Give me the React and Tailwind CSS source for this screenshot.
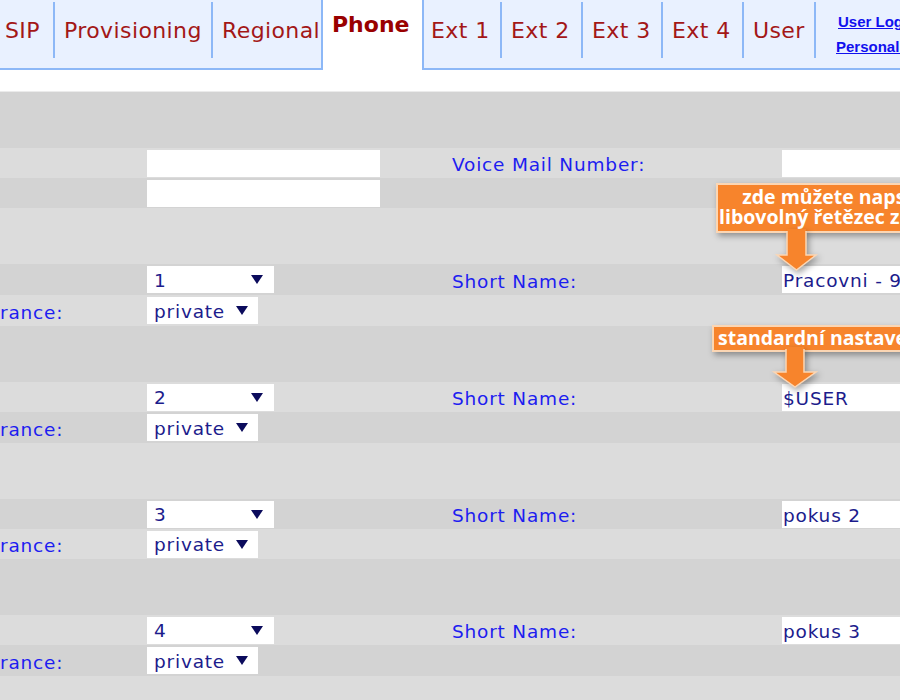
import React from 'react';

const DARK = 'bg-[#d3d3d3]';
const LIGHT = 'bg-[#dcdcdc]';

// triangle used inside the fake select boxes
const Arrow = () => (
    <svg width="12" height="9" viewBox="0 0 12 9" className="shrink-0">
        <polygon points="0,0 12,0 6,9" fill="#0b0b5c" />
    </svg>
);

const Select = ({ value, size }) => (
    <div className={`flex items-center justify-between h-[27px] bg-white pl-[7px] ${size === 'wide' ? 'w-[127px] pr-[11px]' : 'w-[111px] pr-[10px]'}`}>
        <span className="pt-[1px] leading-[27px] text-[#1c1c8c]">{value}</span>
        <Arrow />
    </div>
);

const TextBox = ({ value, wide }) => (
    <div className={`h-[27px] bg-white pl-[1px] ${wide ? 'w-full' : 'w-[233px]'}`}>
        <span className="block pt-[1px] leading-[27px] whitespace-nowrap text-[#1c1c8c]">{value}</span>
    </div>
);

const Label = ({ children }) => (
    <span className="pt-[3px] leading-[27px] whitespace-nowrap text-[#1d1df0]">{children}</span>
);

// one row of the settings table
const Row = ({ h, bg, c1, c2, c3, c4 }) => (
    <div className={`flex ${h} ${bg}`}>
        <div className="w-[147px] flex items-center shrink-0">{c1}</div>
        <div className="w-[305px] flex items-center shrink-0">{c2}</div>
        <div className="w-[330px] flex items-center shrink-0">{c3}</div>
        <div className="flex-1 flex items-center min-w-0">{c4}</div>
    </div>
);

const Tab = ({ label, w, pl }) => (
    <div className={`${w} ${pl} pt-[20px] leading-[22px] tracking-[0.4px] text-[#a31717] whitespace-nowrap shrink-0`}>
        {label}
    </div>
);

const Sep = () => <div className="self-start mt-[2px] h-[56px] w-[2px] bg-[#8db8f7] shrink-0" />;

const App = () => {
    const appearance = <Label>rance:</Label>;

    return (
        <div className="relative w-[900px] h-[700px] overflow-hidden bg-white font-['DejaVu_Sans',sans-serif]">

            {/* Tabs */}
            <div className="flex h-[70px] text-[22px]">
                <div className="flex w-[323px] shrink-0 bg-[#e9f1ff] border-r-2 border-b-2 border-[#8db8f7]">
                    <Tab label="SIP" w="w-[53px]" pl="pl-[5px]" />
                    <Sep />
                    <Tab label="Provisioning" w="w-[156px]" pl="pl-[9px]" />
                    <Sep />
                    <Tab label="Regional" w="flex-1" pl="pl-[9px]" />
                </div>
                <div className="w-[99px] shrink-0 pl-[9px] pt-[14px] leading-[22px] font-bold text-[#990000]">
                    Phone
                </div>
                <div className="flex flex-1 bg-[#e9f1ff] border-l-2 border-b-2 border-[#8db8f7]">
                    <Tab label="Ext 1" w="w-[76px]" pl="pl-[7px]" />
                    <Sep />
                    <Tab label="Ext 2" w="w-[79px]" pl="pl-[9px]" />
                    <Sep />
                    <Tab label="Ext 3" w="w-[78px]" pl="pl-[9px]" />
                    <Sep />
                    <Tab label="Ext 4" w="w-[79px]" pl="pl-[9px]" />
                    <Sep />
                    <Tab label="User" w="w-[70px]" pl="pl-[9px]" />
                    <Sep />
                    <div className="pl-[20px] pt-[9px] leading-[25px] text-[15px] font-bold font-['Liberation_Sans',sans-serif] text-[#1010ee] whitespace-nowrap">
                        <a href="#" className="block underline pl-[2px]">User Login</a>
                        <a href="#" className="block underline">Personal Directory</a>
                    </div>
                </div>
            </div>

            <div className="h-[22px] border-b border-[#ebebeb]" />

            {/* Settings table */}
            <div className="text-[18.5px] tracking-[0.8px]">
                <Row h="h-[56px]" bg={DARK} />
                <Row h="h-[30px]" bg={LIGHT} c2={<TextBox value="" />} c3={<Label>Voice Mail Number:</Label>} c4={<TextBox value="" wide />} />
                <Row h="h-[30px]" bg={DARK} c2={<TextBox value="" />} />
                <Row h="h-[56px]" bg={LIGHT} />
                <Row h="h-[31px]" bg={DARK} c2={<Select value="1" size="wide" />} c3={<Label>Short Name:</Label>} c4={<TextBox value="Pracovni - 9" wide />} />
                <Row h="h-[31px]" bg={LIGHT} c1={appearance} c2={<Select value="private" />} />
                <Row h="h-[56px]" bg={DARK} />
                <Row h="h-[30px]" bg={LIGHT} c2={<Select value="2" size="wide" />} c3={<Label>Short Name:</Label>} c4={<TextBox value="$USER" wide />} />
                <Row h="h-[31px]" bg={DARK} c1={appearance} c2={<Select value="private" />} />
                <Row h="h-[56px]" bg={LIGHT} />
                <Row h="h-[30px]" bg={DARK} c2={<Select value="3" size="wide" />} c3={<Label>Short Name:</Label>} c4={<TextBox value="pokus 2" wide />} />
                <Row h="h-[30px]" bg={LIGHT} c1={appearance} c2={<Select value="private" />} />
                <Row h="h-[56px]" bg={DARK} />
                <Row h="h-[30px]" bg={LIGHT} c2={<Select value="4" size="wide" />} c3={<Label>Short Name:</Label>} c4={<TextBox value="pokus 3" wide />} />
                <Row h="h-[31px]" bg={DARK} c1={appearance} c2={<Select value="private" />} />
                <Row h="h-[30px]" bg={LIGHT} />
            </div>

            {/* Callout 1 */}
            <div className="absolute left-[716px] top-[183px] w-max px-[1px] pt-[2px] pb-[4px] bg-[#f7842c] border-2 border-[#fbd6b4] shadow-[2px_3px_6px_rgba(0,0,0,0.35)] text-center text-white font-bold text-[19.5px] leading-[20px] font-['Open_Sans',sans-serif] whitespace-nowrap">
                <div>zde můžete napsat</div>
                <div>libovolný řetězec znaků</div>
            </div>
            <svg className="absolute left-[772px] top-[229px] drop-shadow-[2px_3px_3px_rgba(0,0,0,0.35)]" width="50" height="46" viewBox="0 0 50 46">
                <path d="M15,0 L15,26 L5,26 L24.5,41 L44,26 L34,26 L34,0 Z" fill="#f7842c" />
                <path d="M15,2 L15,26 L5,26 L24.5,41 L44,26 L34,26 L34,2" fill="none" stroke="#fbd6b4" strokeWidth="1.5" />
            </svg>

            {/* Callout 2 */}
            <div className="absolute left-[712px] top-[325px] w-[230px] pl-[4px] pt-[1px] pb-[2px] bg-[#f7842c] border-2 border-[#fbd6b4] shadow-[2px_3px_6px_rgba(0,0,0,0.35)] text-white font-bold text-[19.5px] leading-[20px] font-['Open_Sans',sans-serif] whitespace-nowrap">
                standardní nastavení
            </div>
            <svg className="absolute left-[770px] top-[347px] drop-shadow-[2px_3px_3px_rgba(0,0,0,0.35)]" width="50" height="46" viewBox="0 0 50 46">
                <path d="M16,0 L16,25 L4,25 L25,40 L46,25 L34,25 L34,0 Z" fill="#f7842c" />
                <path d="M16,2 L16,25 L4,25 L25,40 L46,25 L34,25 L34,2" fill="none" stroke="#fbd6b4" strokeWidth="1.5" />
            </svg>
        </div>
    );
};

export default App;
